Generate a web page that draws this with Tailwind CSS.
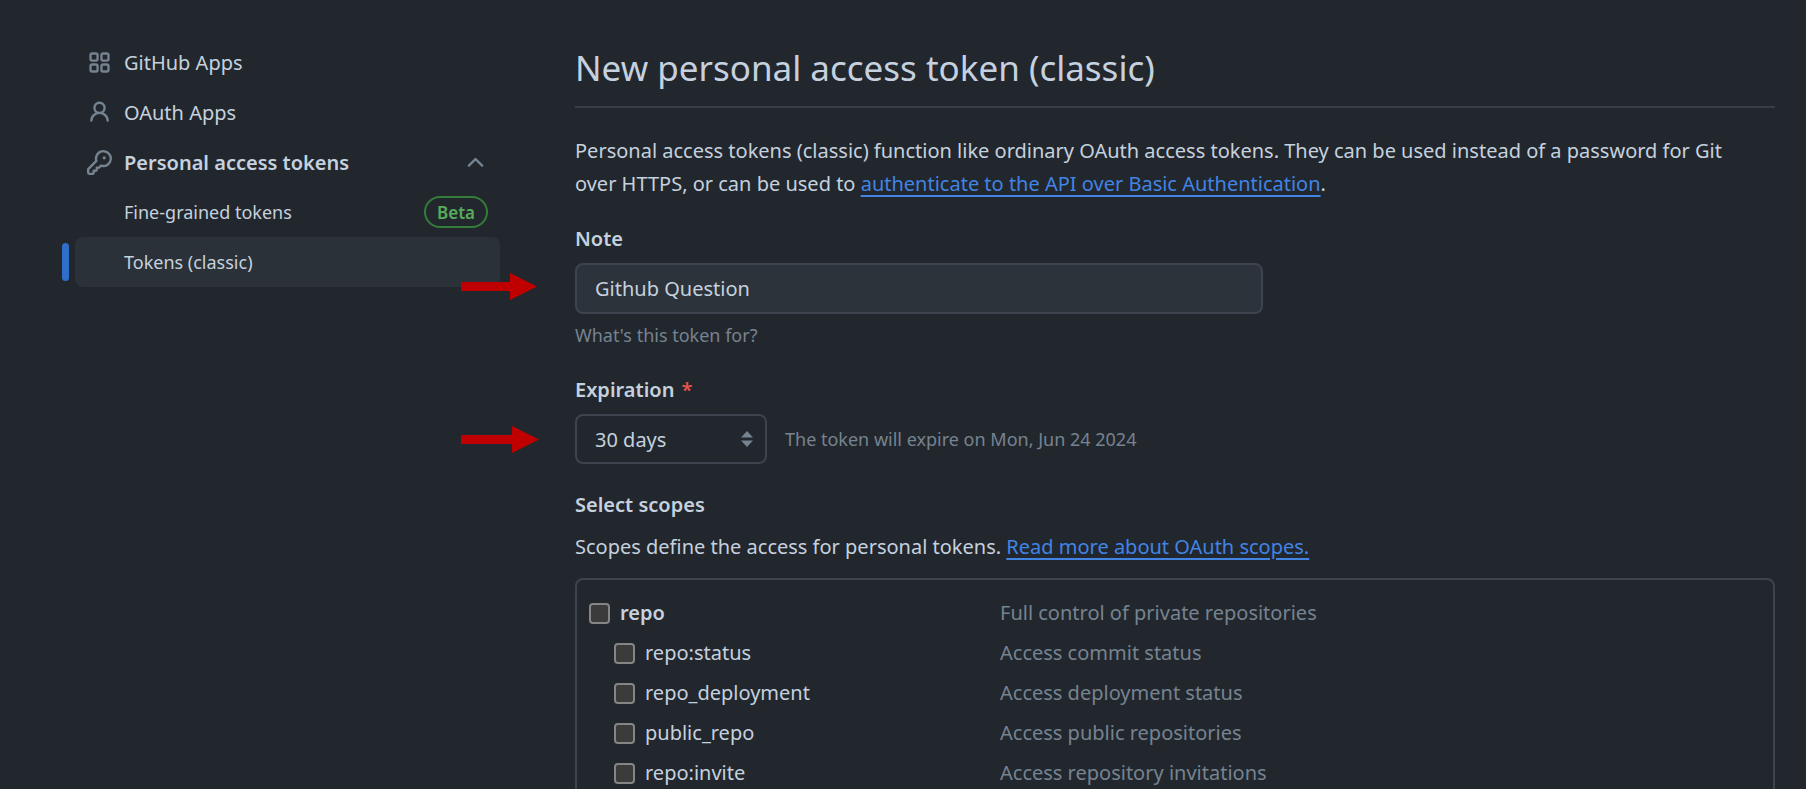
<!DOCTYPE html>
<html lang="en">
  <head>
    <meta charset="UTF-8" />
    <meta name="viewport" content="width=device-width, initial-scale=1.0" />
    <title>New personal access token (classic)</title>
    <script src="https://cdn.jsdelivr.net/npm/@tailwindcss/browser@4"></script>
  </head>

  <body class="bg-[#22272e] text-[#c5d1de] font-['Noto_Sans',sans-serif] text-[20px] leading-[33px]">
    <div class="relative flex h-screen overflow-hidden">
      <!-- Sidebar -->
      <nav class="w-[500px] shrink-0 pl-[75px] pt-[37px]">
        <ul>
          <li>
            <a href="#" class="flex h-[50px] items-center gap-3 pl-3">
              <svg class="size-[25px] text-[#768390]" viewBox="0 0 16 16" fill="currentColor"><path d="M1.5 3.25c0-.966.784-1.75 1.75-1.75h2.5c.966 0 1.75.784 1.75 1.75v2.5A1.75 1.75 0 0 1 5.75 7.5h-2.5A1.75 1.75 0 0 1 1.5 5.75Zm7 0c0-.966.784-1.75 1.75-1.75h2.5c.966 0 1.75.784 1.75 1.75v2.5a1.75 1.75 0 0 1-1.75 1.75h-2.5A1.75 1.75 0 0 1 8.5 5.75Zm-7 7c0-.966.784-1.75 1.75-1.75h2.5c.966 0 1.75.784 1.75 1.75v2.5a1.75 1.75 0 0 1-1.75 1.75h-2.5a1.75 1.75 0 0 1-1.75-1.75Zm7 0c0-.966.784-1.75 1.75-1.75h2.5c.966 0 1.75.784 1.75 1.75v2.5a1.75 1.75 0 0 1-1.75 1.75h-2.5a1.75 1.75 0 0 1-1.75-1.75ZM3.25 3a.25.25 0 0 0-.25.25v2.5c0 .138.112.25.25.25h2.5A.25.25 0 0 0 6 5.75v-2.5A.25.25 0 0 0 5.75 3Zm7 0a.25.25 0 0 0-.25.25v2.5c0 .138.112.25.25.25h2.5a.25.25 0 0 0 .25-.25v-2.5a.25.25 0 0 0-.25-.25Zm-7 7a.25.25 0 0 0-.25.25v2.5c0 .138.112.25.25.25h2.5a.25.25 0 0 0 .25-.25v-2.5a.25.25 0 0 0-.25-.25Zm7 0a.25.25 0 0 0-.25.25v2.5c0 .138.112.25.25.25h2.5a.25.25 0 0 0 .25-.25v-2.5a.25.25 0 0 0-.25-.25Z" /></svg>
              GitHub Apps
            </a>
          </li>
          <li>
            <a href="#" class="flex h-[50px] items-center gap-3 pl-3">
              <svg class="size-[25px] text-[#768390]" viewBox="0 0 16 16" fill="currentColor"><path d="M10.561 8.073a6.005 6.005 0 0 1 3.432 5.142.75.75 0 1 1-1.498.07 4.5 4.5 0 0 0-8.99 0 .75.75 0 0 1-1.498-.07 6.004 6.004 0 0 1 3.431-5.142 3.999 3.999 0 1 1 5.123 0ZM10.5 5a2.5 2.5 0 1 0-5 0 2.5 2.5 0 0 0 5 0Z" /></svg>
              OAuth Apps
            </a>
          </li>
          <li>
            <button type="button" class="flex h-[50px] w-full items-center gap-3 pl-3 pr-3 text-left font-semibold">
              <svg class="size-[25px] text-[#768390]" viewBox="0 0 16 16" fill="currentColor"><path d="M10.5 0a5.499 5.499 0 1 1-1.288 10.848l-.932.932a.749.749 0 0 1-.53.22H7v.75a.749.749 0 0 1-.22.53l-.5.5a.749.749 0 0 1-.53.22H5v.75a.749.749 0 0 1-.22.53l-.5.5a.749.749 0 0 1-.53.22h-2A1.75 1.75 0 0 1 0 14.25v-2c0-.199.079-.389.22-.53l4.932-4.932A5.5 5.5 0 0 1 10.5 0Zm-4 5.5c-.001.431.069.86.205 1.269a.75.75 0 0 1-.181.768L1.5 12.56v1.69c0 .138.112.25.25.25h1.69l.06-.06v-1.19a.75.75 0 0 1 .75-.75h1.19l.06-.06v-1.19a.75.75 0 0 1 .75-.75h1.19l1.023-1.025a.75.75 0 0 1 .768-.18A4 4 0 1 0 6.5 5.5ZM11 6a1 1 0 1 1 0-2 1 1 0 0 1 0 2Z" /></svg>
              <span class="flex-1">Personal access tokens</span>
              <svg class="size-[25px] text-[#768390]" viewBox="0 0 16 16" fill="currentColor"><path d="M3.22 10.53a.749.749 0 0 1 0-1.06l4.25-4.25a.749.749 0 0 1 1.06 0l4.25 4.25a.749.749 0 1 1-1.06 1.06L8 6.811 4.28 10.53a.749.749 0 0 1-1.06 0Z" /></svg>
            </button>
            <ul class="text-[18px]">
              <li>
                <a href="#" class="flex h-[50px] items-center justify-between pl-[49px] pr-3">
                  Fine-grained tokens
                  <span class="flex h-8 items-center rounded-full border-2 border-[#347d39] px-[11px] text-[17px] font-semibold text-[#57ab5a]">Beta</span>
                </a>
              </li>
              <li>
                <a href="#" class="relative flex h-[50px] items-center rounded-lg bg-[#2b3138] pl-[49px]">
                  <span class="absolute -left-[13px] top-1.5 h-[38px] w-[7px] rounded-md bg-[#316dca]"></span>
                  Tokens (classic)
                </a>
              </li>
            </ul>
          </li>
        </ul>
      </nav>

      <!-- Token form -->
      <main class="ml-[75px] mr-[31px] flex-1 pt-10">
        <h1 class="border-b-2 border-[#373e47] pb-2.5 text-[35px] leading-[56px]">New personal access token (classic)</h1>

        <form onsubmit="event.preventDefault();">
          <p class="mt-[26px] pr-4">
            Personal access tokens (classic) function like ordinary OAuth access tokens. They can be used instead of a password for Git over HTTPS, or can be used to
            <a href="#" class="text-[#4184e4] underline decoration-2 underline-offset-4">authenticate to the API over Basic Authentication</a>.
          </p>

          <label for="note" class="mt-[22px] block font-semibold">Note</label>
          <input
            type="text"
            id="note"
            value="Github Question"
            class="mt-2 block h-[51px] w-[688px] max-w-full rounded-lg border-2 border-[#3d444d] bg-[#2d333b] px-[18px]"
          />
          <p class="mt-2 text-[18px] leading-[27px] text-[#768390]">What's this token for?</p>

          <label for="expiration" class="mt-6 block font-semibold">Expiration <span class="ml-0.5 text-[#e5534b]">*</span></label>
          <div class="mt-2 flex items-center gap-[18px]">
            <div class="relative">
              <select id="expiration" class="block h-[50px] w-[192px] appearance-none rounded-lg border-2 border-[#3d444d] bg-[#22272e] px-[18px]">
                <option>7 days</option>
                <option selected>30 days</option>
                <option>60 days</option>
                <option>90 days</option>
              </select>
              <svg class="pointer-events-none absolute right-3.5 top-[17px] h-4 w-3" viewBox="0 0 12 16" fill="#768390"><path d="M6 0l6 6.500H0zM6 16l6-6.500H0z" /></svg>
            </div>
            <p class="text-[18px] leading-[27px] text-[#768390]">The token will expire on Mon, Jun 24 2024</p>
          </div>

          <h2 class="mt-6 font-semibold">Select scopes</h2>
          <p class="mt-[9px]">
            Scopes define the access for personal tokens.
            <a href="#" class="text-[#4184e4] underline decoration-2 underline-offset-4">Read more about OAuth scopes.</a>
          </p>

          <ul class="mt-[15px] rounded-lg border-2 border-[#3d444d] px-3 pt-[13px] pb-6 leading-10">
            <li class="flex">
              <label class="flex w-[411px] items-center gap-2.5 font-semibold">
                <input type="checkbox" class="size-[21px] appearance-none rounded-sm border-2 border-[#858585] bg-[#3b3b3b]" />
                repo
              </label>
              <span class="text-[#768390]">Full control of private repositories</span>
            </li>
            <li class="flex">
              <label class="flex w-[411px] items-center gap-2.5 pl-[25px]">
                <input type="checkbox" class="size-[21px] appearance-none rounded-sm border-2 border-[#858585] bg-[#3b3b3b]" />
                repo:status
              </label>
              <span class="text-[#768390]">Access commit status</span>
            </li>
            <li class="flex">
              <label class="flex w-[411px] items-center gap-2.5 pl-[25px]">
                <input type="checkbox" class="size-[21px] appearance-none rounded-sm border-2 border-[#858585] bg-[#3b3b3b]" />
                repo_deployment
              </label>
              <span class="text-[#768390]">Access deployment status</span>
            </li>
            <li class="flex">
              <label class="flex w-[411px] items-center gap-2.5 pl-[25px]">
                <input type="checkbox" class="size-[21px] appearance-none rounded-sm border-2 border-[#858585] bg-[#3b3b3b]" />
                public_repo
              </label>
              <span class="text-[#768390]">Access public repositories</span>
            </li>
            <li class="flex">
              <label class="flex w-[411px] items-center gap-2.5 pl-[25px]">
                <input type="checkbox" class="size-[21px] appearance-none rounded-sm border-2 border-[#858585] bg-[#3b3b3b]" />
                repo:invite
              </label>
              <span class="text-[#768390]">Access repository invitations</span>
            </li>
          </ul>
        </form>
      </main>

      <!-- Arrows pointing at the fields to fill in -->
      <svg class="absolute left-[461px] top-[273px] h-[27px] w-[76px]" viewBox="0 0 76 27" fill="#c00000"><path d="M0 9h49V0l27 13.500L49 27v-9H0z" /></svg>
      <svg class="absolute left-[461px] top-[426px] h-[27px] w-[78px]" viewBox="0 0 78 27" fill="#c00000"><path d="M0 9h51V0l27 13.500L51 27v-9H0z" /></svg>
    </div>
  </body>
</html>
